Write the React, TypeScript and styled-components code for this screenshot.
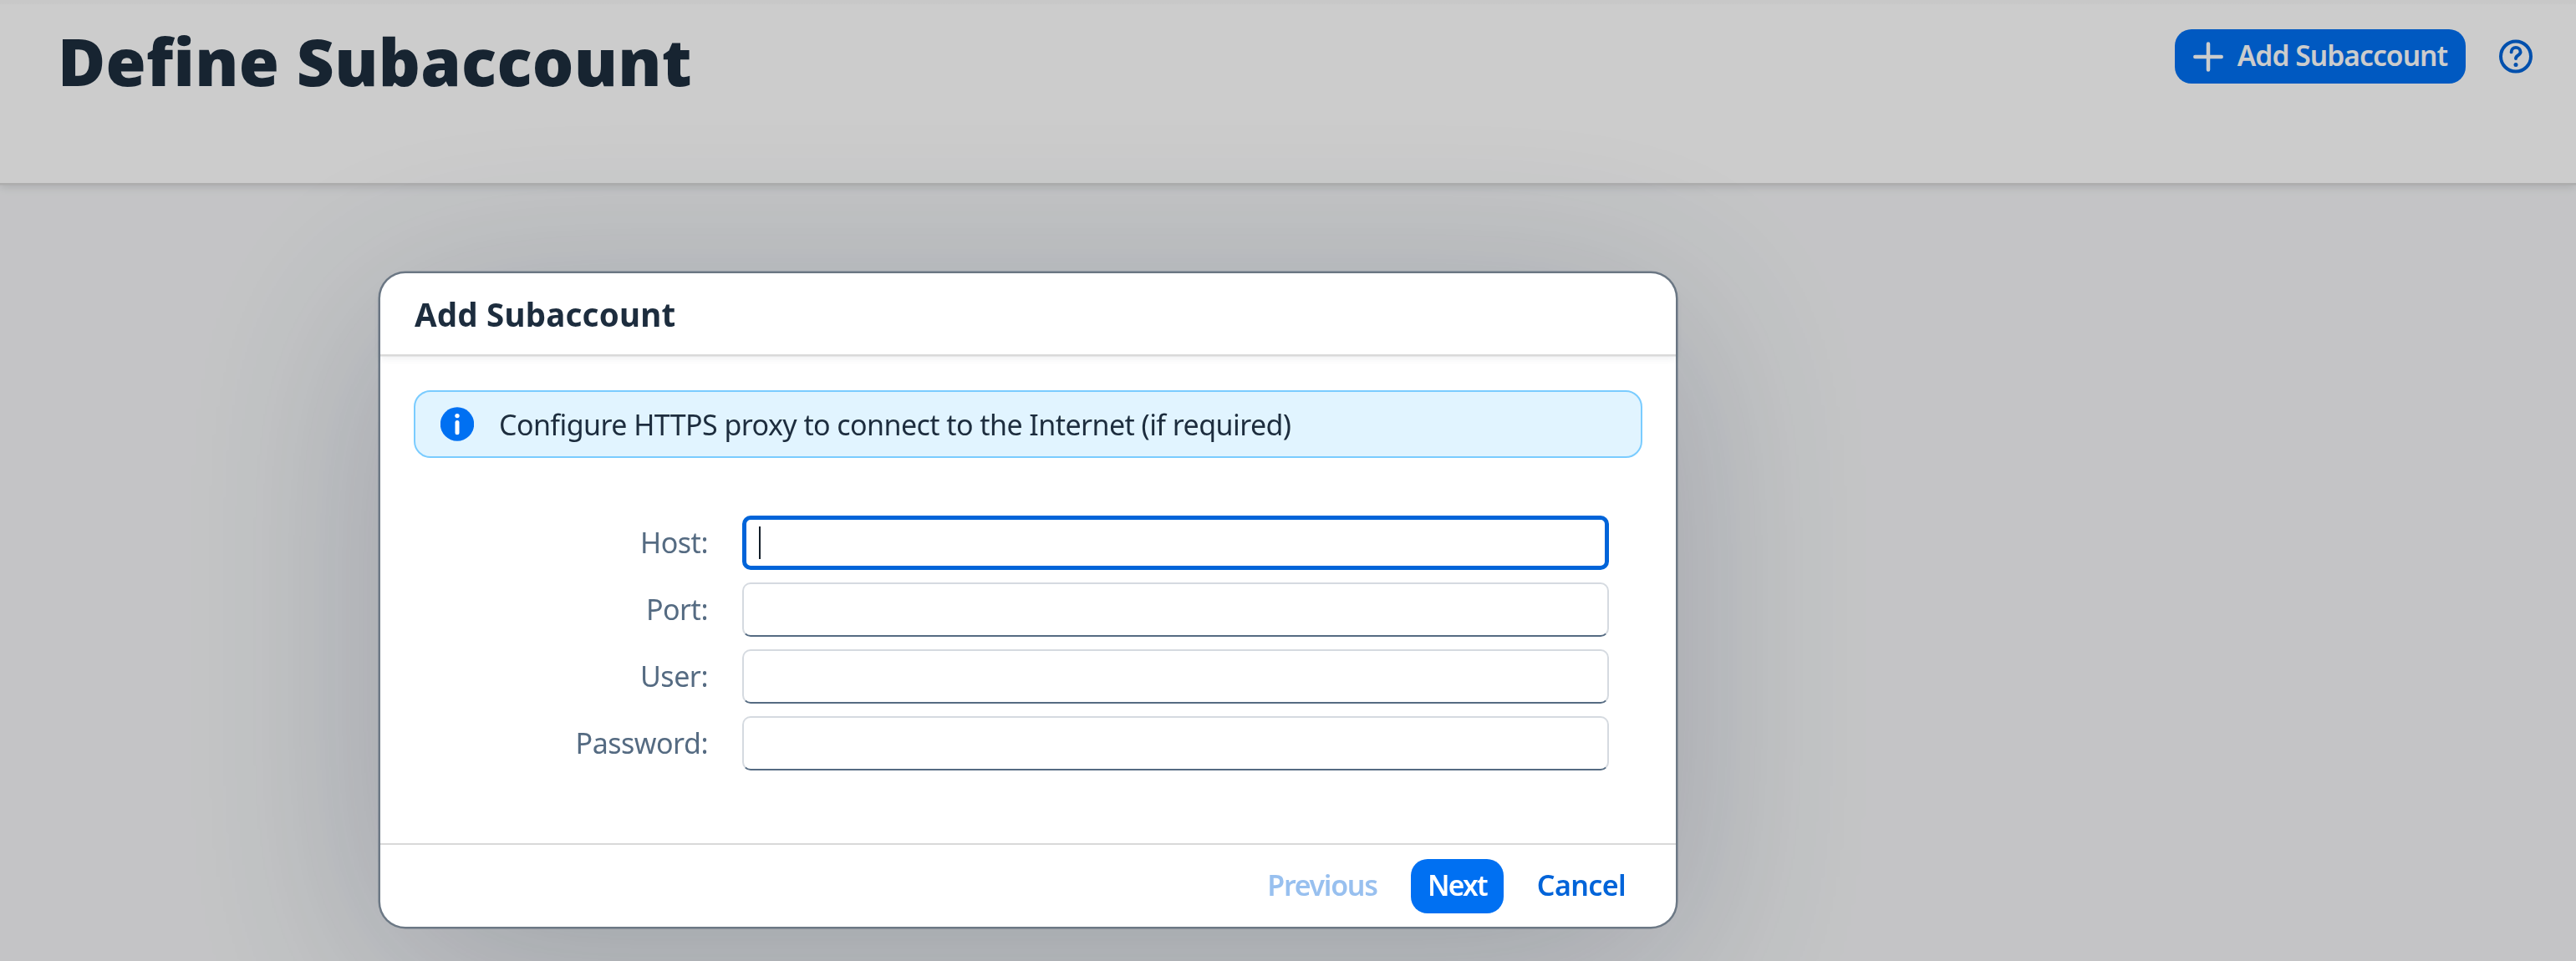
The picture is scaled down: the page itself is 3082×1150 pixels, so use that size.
import React from "react";
import styled, { createGlobalStyle } from "styled-components";

const GlobalStyle = createGlobalStyle`
  * { box-sizing: border-box; }
  html, body { margin: 0; padding: 0; overflow: hidden; }
  body { font-family: "Noto Sans", "Open Sans", sans-serif; font-size: 34px; color: #1d2d3e; background: #f5f6f7; }
`;

const Page = styled.div`
  height: 1150px;
  overflow: hidden;
  background: #f5f6f8;
`;

const PageHeader = styled.header`
  display: flex;
  justify-content: space-between;
  align-items: flex-start;
  height: 218.5px;
  padding: 18px 52px 0 69px;
  background: linear-gradient(#fafafa 0, #fafafa 4px, #fff 6px);
  box-shadow: 0 2.5px 0 #d9d9d9, 0 5px 10px rgba(0, 0, 0, 0.12);
`;

const PageTitle = styled.h1`
  margin: 0;
  font-size: 78px;
  line-height: 110px;
  font-weight: 900;
  letter-spacing: 0.3px;
  white-space: nowrap;
`;

const HeaderActions = styled.div`
  display: flex;
  align-items: center;
  gap: 40px;
  padding-top: 17px;
`;

const Button = styled.button<{ $kind?: "emphasized" | "plain"; $width: number; $spacing?: number }>`
  display: flex;
  align-items: center;
  justify-content: center;
  gap: 17px;
  width: ${(p) => p.$width}px;
  height: 65px;
  padding: 0 0 3px;
  border: 0;
  border-radius: 20px;
  font-family: inherit;
  font-size: ${(p) => (p.$kind === "emphasized" ? 33.5 : 34)}px;
  font-weight: ${(p) => (p.$kind === "emphasized" ? 650 : 600)};
  line-height: 44px;
  white-space: nowrap;
  letter-spacing: ${(p) => p.$spacing ?? -0.9}px;
  color: ${(p) => (p.$kind === "emphasized" ? "#fff" : "#0064d9")};
  background: ${(p) => (p.$kind === "emphasized" ? "#0070f2" : "transparent")};
  &:disabled { opacity: 0.4; }
  svg { flex: none; position: relative; top: 1.5px; }
`;

const HelpButton = styled.button`
  display: flex;
  padding: 0;
  border: 0;
  background: none;
  color: #0064d9;
`;

const Overlay = styled.div`
  position: fixed;
  inset: 0;
  padding: 327px 0 0 455px;
  background: rgba(0, 0, 0, 0.2);
`;

const Dialog = styled.section`
  display: flex;
  flex-direction: column;
  width: 1550px;
  height: 782px;
  border-radius: 30px;
  background: #fff;
  box-shadow: 0 0 0 2.5px #6c7885, 0 50px 250px rgba(34, 53, 72, 0.25);
`;

const DialogHeader = styled.header`
  display: flex;
  align-items: center;
  height: 97px;
  padding: 0 41px;
  border-radius: 30px 30px 0 0;
  box-shadow: 0 2.5px 0 #d9d9d9, 0 5px 8px rgba(34, 53, 72, 0.08);
`;

const DialogTitle = styled.h2`
  margin: 0;
  font-size: 38.5px;
  line-height: 54px;
  font-weight: 700;
  letter-spacing: 0.2px;
`;

const DialogBody = styled.div`
  flex: 1;
  padding: 43px 40px 0;
`;

const MessageStrip = styled.div`
  display: flex;
  align-items: center;
  gap: 30px;
  height: 81px;
  padding: 0 30px;
  border: 2px solid #7accff;
  border-radius: 20px;
  background: #e1f4ff;
  letter-spacing: -0.57px;
  white-space: nowrap;
`;

const Form = styled.form`
  display: grid;
  gap: 15px;
  padding: 69px 40px 0 0;
`;

const Field = styled.label`
  display: grid;
  grid-template-columns: 352px 1037px;
  column-gap: 41px;
  align-items: center;
  height: 65px;
`;

const Label = styled.span`
  padding-bottom: 2px;
  text-align: right;
  line-height: 44px;
  color: #556b82;
  letter-spacing: -0.5px;
`;

const Control = styled.span<{ $focused?: boolean }>`
  display: flex;
  align-items: center;
  height: 65px;
  padding-left: 15px;
  border-radius: 10px;
  background: #fff;
  border: ${(p) => (p.$focused ? "5px solid #0064d9" : "2.5px solid #d5dae0")};
  ${(p) => (p.$focused ? "" : "border-bottom-color: #556b82;")}
`;

const Caret = styled.i`
  width: 2px;
  height: 39px;
  background: #131e29;
`;

const DialogFooter = styled.footer`
  display: flex;
  align-items: center;
  justify-content: flex-end;
  gap: 19px;
  height: 100px;
  padding-right: 39px;
  padding-top: 1px;
  border-top: 2px solid #d9d9d9;
`;

const PlusIcon = () => (
  <svg width="36" height="36" viewBox="0 0 36 36" fill="none" stroke="currentColor" strokeWidth="4.5" strokeLinecap="round">
    <path d="M18 2.5V33.5M2.3 18H33.7" />
  </svg>
);

const HelpIcon = () => (
  <svg width="40" height="41" viewBox="0 0 40 41" fill="none" stroke="currentColor">
    <circle cx="20" cy="20.5" r="18" strokeWidth="4" />
    <path d="M14.6 15.4C14.6 11.9 17 9.9 20 9.9S25.6 12 25.6 15.3C25.6 19.2 20 19.2 20 23" strokeWidth="3.9" strokeLinecap="round" />
    <circle cx="20" cy="30.4" r="2.5" fill="currentColor" stroke="none" />
  </svg>
);

const InfoIcon = () => (
  <svg width="40" height="41" viewBox="0 0 40 41">
    <circle cx="20" cy="20.5" r="20.2" fill="#0070f2" />
    <circle cx="20" cy="10.6" r="2.7" fill="#fff" />
    <path d="M20 18.6V30.8" stroke="#fff" strokeWidth="5" strokeLinecap="round" />
  </svg>
);

const fields = ["Host", "Port", "User", "Password"];

export default function App() {
  return (
    <Page>
      <GlobalStyle />
      <PageHeader>
        <PageTitle>Define Subaccount</PageTitle>
        <HeaderActions>
          <Button $kind="emphasized" $width={348} $spacing={-0.9}>
            <PlusIcon />
            Add Subaccount
          </Button>
          <HelpButton aria-label="Help">
            <HelpIcon />
          </HelpButton>
        </HeaderActions>
      </PageHeader>
      <Overlay>
        <Dialog role="dialog">
          <DialogHeader>
            <DialogTitle>Add Subaccount</DialogTitle>
          </DialogHeader>
          <DialogBody>
            <MessageStrip>
              <InfoIcon />
              Configure HTTPS proxy to connect to the Internet (if required)
            </MessageStrip>
            <Form>
              {fields.map((name, i) => (
                <Field key={name}>
                  <Label>{name}:</Label>
                  <Control $focused={i === 0}>{i === 0 && <Caret />}</Control>
                </Field>
              ))}
            </Form>
          </DialogBody>
          <DialogFooter>
            <Button $width={174} $spacing={-1.3} disabled>Previous</Button>
            <Button $kind="emphasized" $width={111} $spacing={-1.7}>Next</Button>
            <Button $width={148} $spacing={-0.6}>Cancel</Button>
          </DialogFooter>
        </Dialog>
      </Overlay>
    </Page>
  );
}
